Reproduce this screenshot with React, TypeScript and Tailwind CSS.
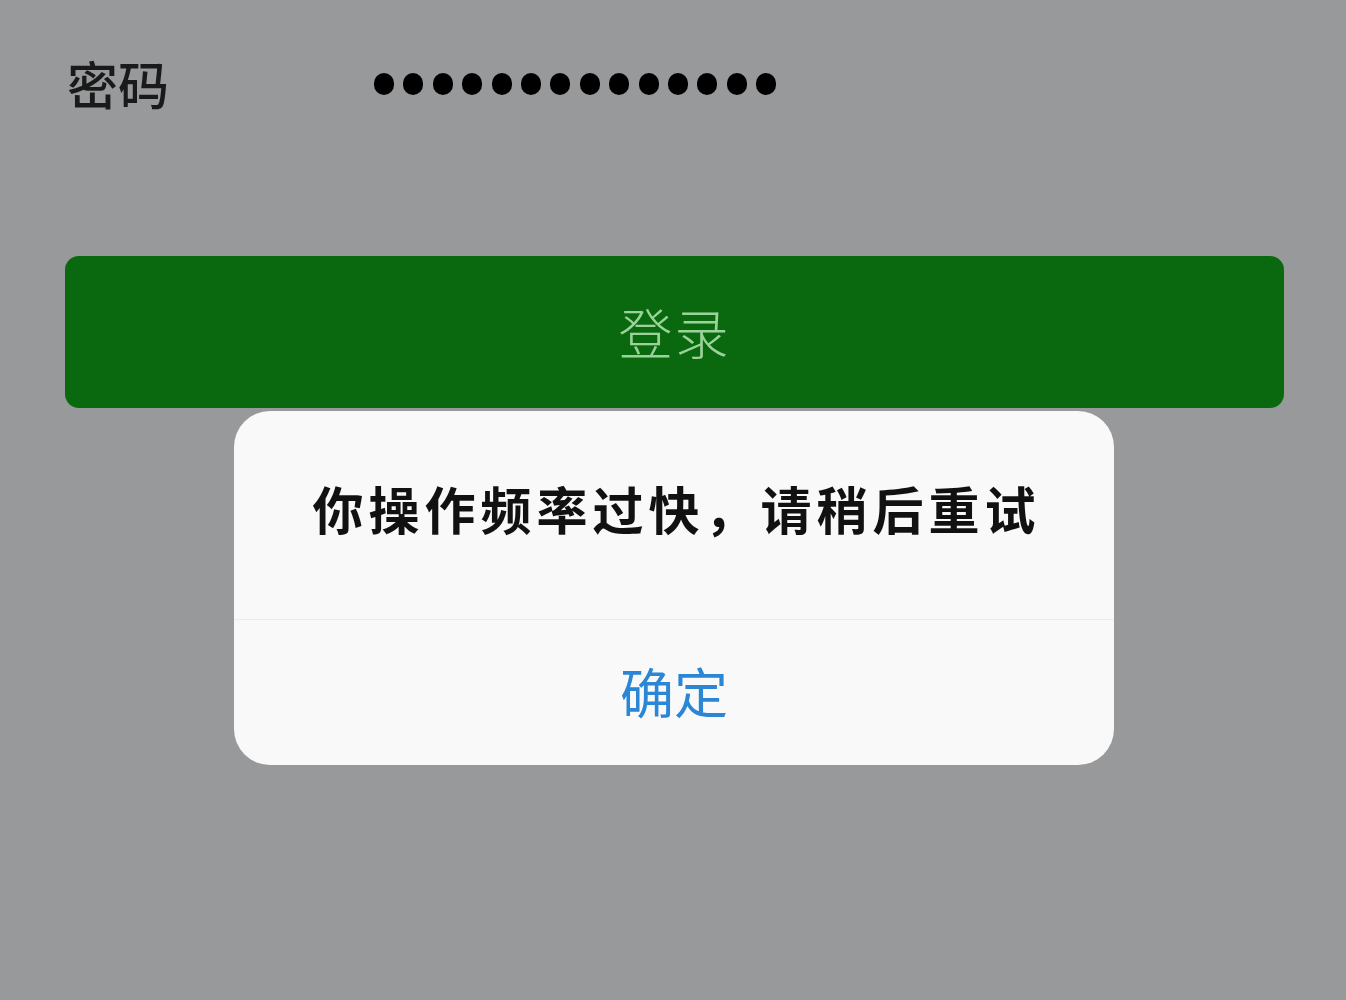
export default function App() {
  const dots = Array.from({ length: 14 });

  return (
    <div
      className="w-full h-[1000px] bg-[#98999b] overflow-hidden"
      style={{ fontFamily: '"Noto Sans CJK SC", "Noto Sans", sans-serif' }}
    >
      {/* password row */}
      <div className="flex items-center h-[170px] pb-[4px] pl-[67px]">
        <span className="text-[51px] leading-none font-medium text-[#1a1a1a] w-[307px]">
          密码
        </span>
        <div className="flex items-center gap-[9.4px] mt-[2px]">
          {dots.map((_, i) => (
            <span key={i} className="block w-[20px] h-[22px] rounded-full bg-black" />
          ))}
        </div>
      </div>

      {/* login button */}
      <div className="mt-[86px] mx-[65px] mr-[62px] h-[152px] rounded-[14px] bg-[#0a690e] flex items-center justify-center">
        <span className="text-[54px] leading-none font-light text-[#9ad29a] tracking-[2px]">
          登录
        </span>
      </div>

      {/* alert */}
      <div className="mt-[3px] ml-[234px] w-[880px] h-[354px] rounded-[36px] bg-[#f9f9fa] flex flex-col">
        <div className="h-[209px] flex items-center justify-center pb-[14px] border-b border-[#ececee]">
          <span className="text-[51px] leading-none font-semibold text-[#111] tracking-[5px] pl-[5px]">
            你操作频率过快，请稍后重试
          </span>
        </div>
        <div className="flex-1 flex items-center justify-center pb-[4px]">
          <span className="text-[54px] leading-none font-normal text-[#2b86d6]">确定</span>
        </div>
      </div>
    </div>
  );
}
